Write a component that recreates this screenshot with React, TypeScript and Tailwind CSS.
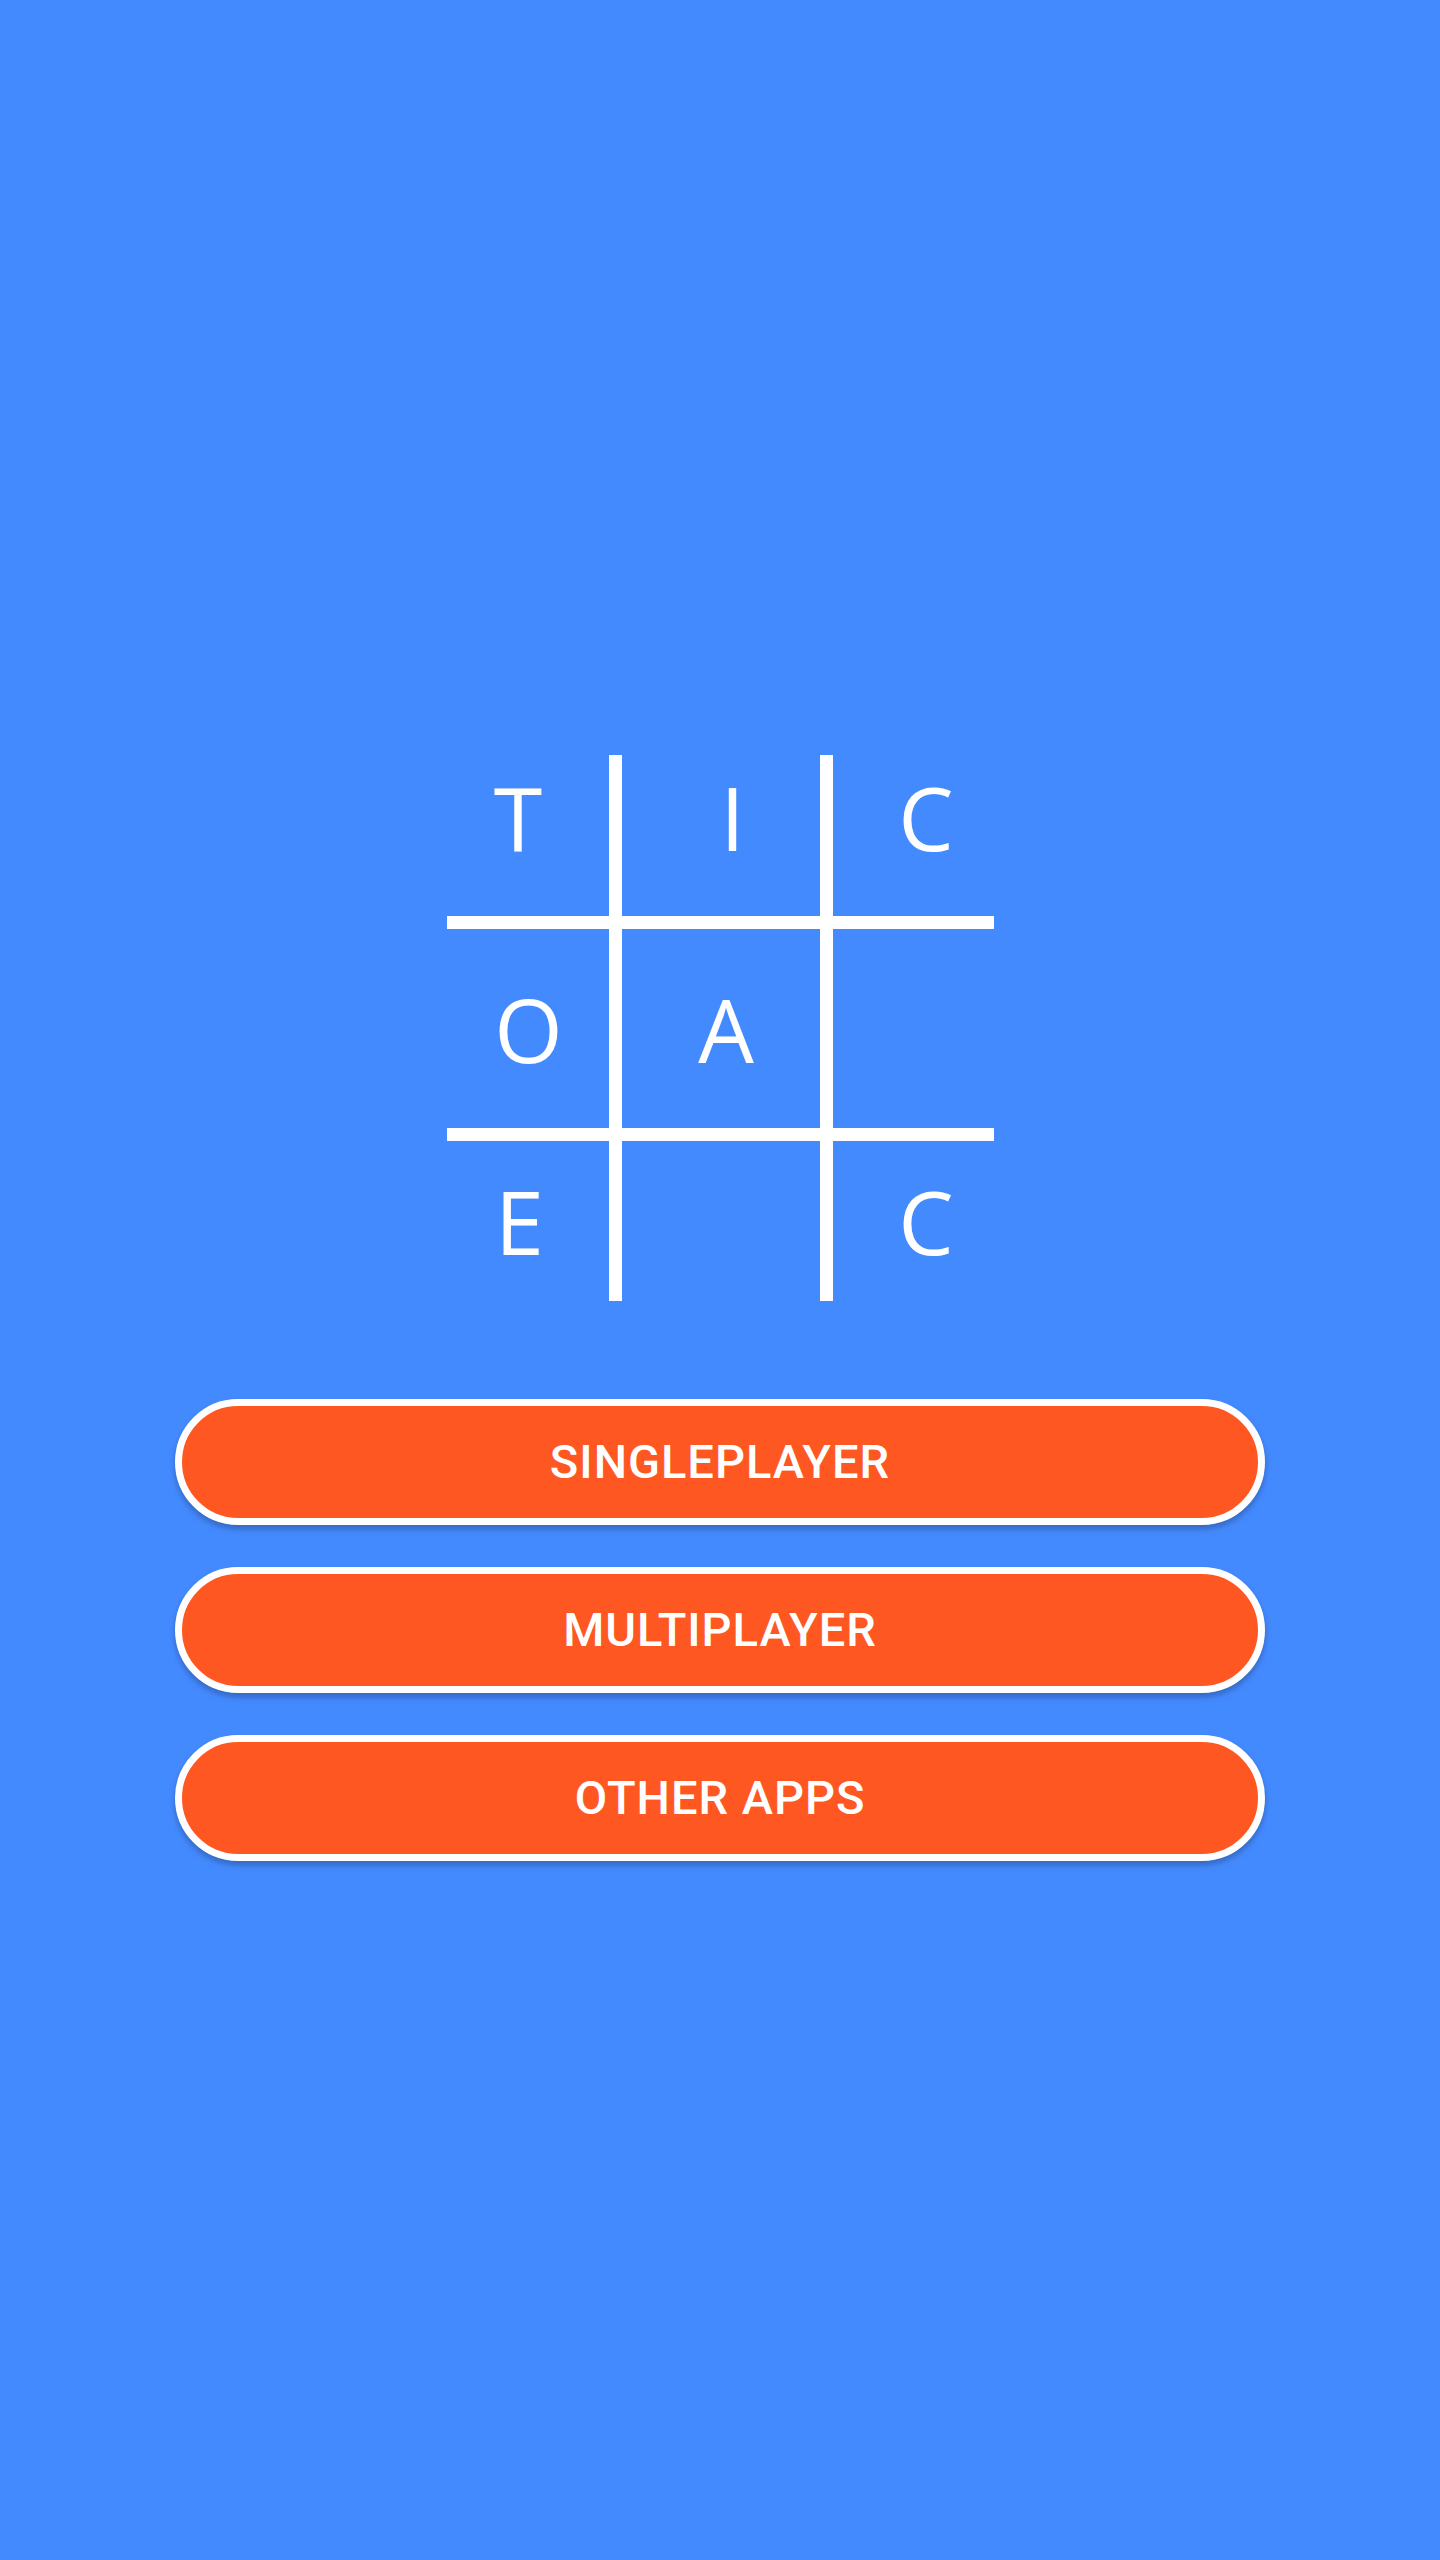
const cells = [
  { l: "T", pad: "pr-[19px] pb-[38px]" },
  { l: "I", pad: "pl-[24px] pb-[38px]" },
  { l: "C", pad: "pl-[26px] pb-[38px]" },
  { l: "O", pad: "pl-[2px]" },
  { l: "A", pad: "pl-[11px]" },
  { l: "", pad: "" },
  { l: "E", pad: "pr-[16px]" },
  { l: "", pad: "" },
  { l: "C", pad: "pl-[26px]" },
];

export default function App() {
  return (
    <main className="flex min-h-screen flex-col items-center bg-[#448aff] pt-[755px]">
      <div className="grid grid-cols-[162px_198px_161px] grid-rows-[161px_199px_160px] gap-[13px] bg-white">
        {cells.map((c, i) => (
          <div
            key={i}
            className={`flex items-center justify-center bg-[#448aff] font-['Open_Sans',sans-serif] text-[88px] leading-none text-white ${c.pad}`}
          >
            {c.l}
          </div>
        ))}
      </div>

      <div className="mt-[98px] flex w-[1090px] flex-col gap-[42px]">
        <MenuButton label="SINGLEPLAYER" />
        <MenuButton label="MULTIPLAYER" />
        <MenuButton label="OTHER APPS" />
      </div>
    </main>
  );
}

function MenuButton({ label }: { label: string }) {
  return (
    <button className="h-[126px] w-full rounded-full border-[7px] border-white bg-[#ff5722] font-['Roboto',sans-serif] text-[47px] font-medium tracking-[1px] text-white shadow-[0_4px_6px_rgba(0,0,0,0.25)]">
      {label}
    </button>
  );
}
